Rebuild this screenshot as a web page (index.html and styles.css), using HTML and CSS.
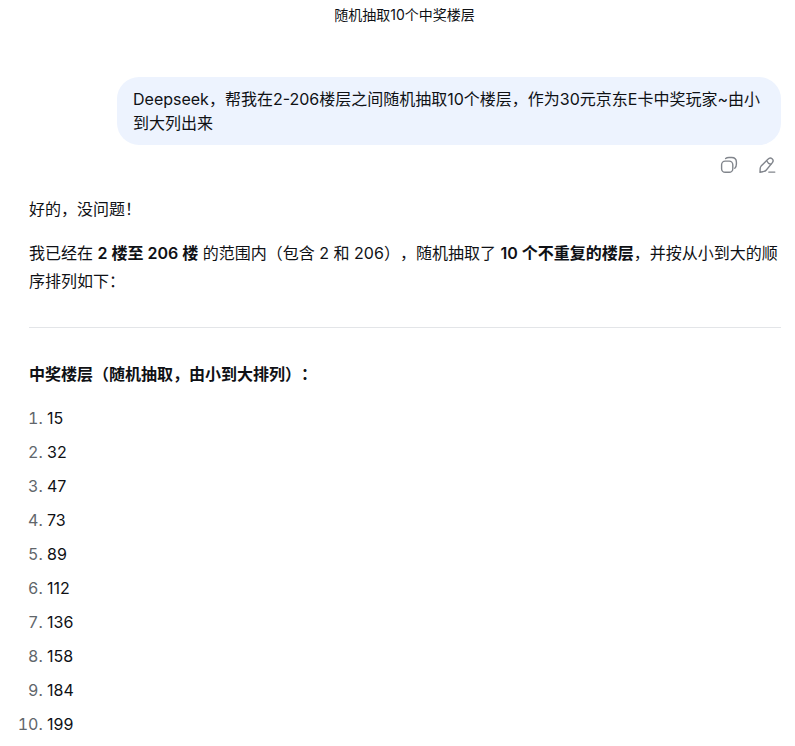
FILE: index.html
```html
<!DOCTYPE html>
<html lang="zh-CN">
<head>
    <meta charset="UTF-8">
    <meta name="viewport" content="width=device-width, initial-scale=1.0">
    <title>随机抽取10个中奖楼层</title>
    <link rel="stylesheet" href="styles.css">
</head>
<body>
    <header class="chat-title">随机抽取10个中奖楼层</header>

    <main class="chat">
        <div class="user-message">
            <div class="bubble">Deepseek，帮我在2-206楼层之间随机抽取10个楼层，作为30元京东E卡中奖玩家~由小到大列出来</div>
            <div class="actions">
                <button type="button" class="icon-btn" aria-label="复制">
                    <svg viewBox="0 0 18 18" width="18" height="18">
                        <rect x="1.6" y="5.1" width="11.2" height="11.2" rx="3.6"/>
                        <path d="M5.6 2.6C6.5 1.8 7.600 1.500 9 1.500h2.600c3.200 0 4.800 1.600 4.800 4.800V8c0 2-.5 3.300-1.600 4.200"/>
                    </svg>
                </button>
                <button type="button" class="icon-btn" aria-label="编辑">
                    <svg viewBox="0 0 18 18" width="18" height="18">
                        <path d="M9.900 3.300c1.200-1.400 2.900-1.700 4.200-.6s1.300 2.700.1 4.200l-6.100 7.300c-.6.700-1.100 1-2 1.200l-4.100.9.2-4c.1-.9.300-1.500.9-2.200z"/>
                        <path d="M9 5.200c.7 1.700 1.900 2.700 3.800 3M10.800 16.100h6"/>
                    </svg>
                </button>
            </div>
        </div>

        <div class="answer">
            <p>好的，没问题！</p>
            <p>我已经在 <strong>2 楼至 206 楼</strong> 的范围内（包含 2 和 206），随机抽取了 <strong>10 个不重复的楼层</strong>，并按从小到大的顺序排列如下：</p>
            <hr>
            <h3>中奖楼层（随机抽取，由小到大排列）：</h3>
            <ol>
                <li>15</li>
                <li>32</li>
                <li>47</li>
                <li>73</li>
                <li>89</li>
                <li>112</li>
                <li>136</li>
                <li>158</li>
                <li>184</li>
                <li>199</li>
            </ol>
        </div>
    </main>
</body>
</html>
```
FILE: styles.css
```css
:root {
    --text-color: #0f1115;
    --muted-color: #61666b;
    --icon-color: #81858c;
    --bubble-color: #edf3fe;
    --line-color: #e3e5e8;
}

* {
    box-sizing: border-box;
}

body {
    margin: 0;
    padding: 4px 14px 8px 28px;
    background: #fff;
    color: var(--text-color);
    font-family: Inter, "Noto Sans CJK SC", sans-serif;
    font-size: 16px;
    line-height: 28px;
    text-spacing-trim: space-all;
}

.chat-title {
    font-size: 14px;
    line-height: 22px;
    text-align: center;
}

.chat {
    padding: 51px 0 0 1px;
}

.user-message {
    display: flex;
    flex-direction: column;
    align-items: flex-end;
    padding-left: 88px;
}

.bubble {
    padding: 10px 16px;
    border-radius: 22px;
    background: var(--bubble-color);
    line-height: 24px;
}

.actions {
    display: flex;
    gap: 10px;
    margin-top: 6px;
}

.icon-btn {
    display: flex;
    align-items: center;
    justify-content: center;
    width: 28px;
    height: 28px;
    padding: 0;
    border: none;
    border-radius: 8px;
    background: none;
    color: var(--icon-color);
    cursor: pointer;
}

.icon-btn:hover {
    background: #f1f2f4;
}

.icon-btn svg {
    fill: none;
    stroke: currentColor;
    stroke-width: 1.4;
    stroke-linecap: round;
    stroke-linejoin: round;
}

.answer {
    margin-top: 16px;
}

.answer p {
    margin: 0 0 16px;
}

.answer strong,
.answer h3 {
    font-weight: 600;
}

.answer hr {
    height: 1px;
    margin: 32px 0;
    border: none;
    background: var(--line-color);
}

.answer h3 {
    margin: 0 0 16px;
    font-size: 16px;
}

.answer ol {
    margin: 0;
    padding-left: 18px;
}

.answer li + li {
    margin-top: 6px;
}

.answer li::marker {
    color: var(--muted-color);
}
```
